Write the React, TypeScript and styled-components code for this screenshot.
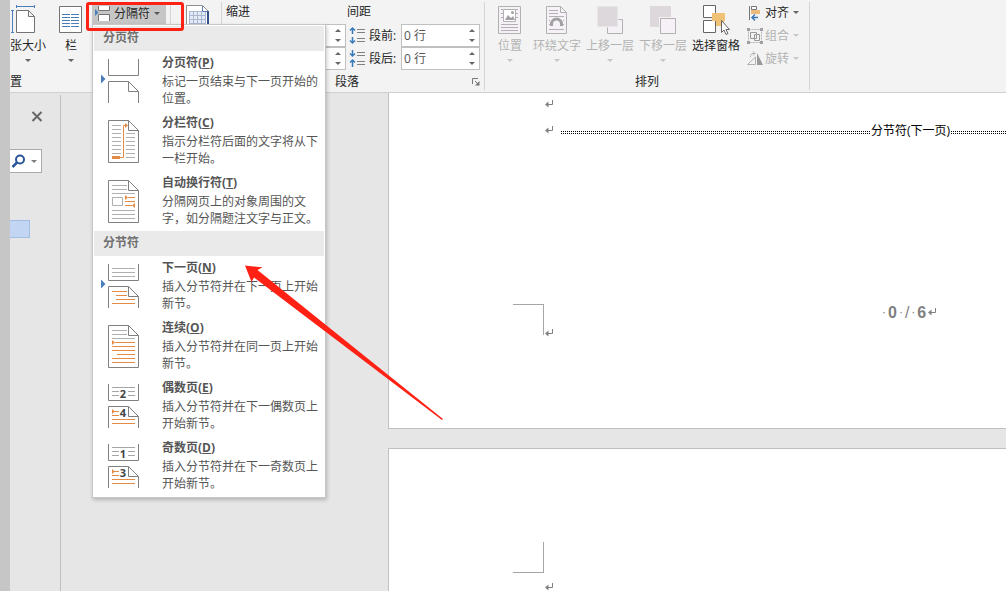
import React from "react";
import styled, { createGlobalStyle } from "styled-components";

const GlobalStyle = createGlobalStyle`
  *, *::before, *::after { box-sizing: border-box; }
  html, body { margin: 0; overflow: hidden; }
  body {
    background: #e6e6e6;
    color: #262626;
    font: 12px/17px "Open Sans", "Noto Sans CJK SC", sans-serif;
  }
  button, input { font: inherit; color: inherit; }
  button { margin: 0; padding: 0; border: 0; background: none; }
  h2, h3, p { margin: 0; font: inherit; }
  svg { display: block; flex: none; overflow: visible; }
`;

const Window = styled.div`
  position: relative;
  display: flex;
  height: 100vh;
  overflow: hidden;
`;

const Gutter = styled.div`
  flex: none;
  width: 10px;
  background: #c6c6c6;
`;

const Main = styled.div`
  flex: 1;
  min-width: 0;
  display: flex;
  flex-direction: column;
`;

/* ---------- Ribbon ---------- */

const Ribbon = styled.header`
  flex: none;
  position: relative;
  z-index: 1;
  display: flex;
  padding: 2px 0;
  background: #f3f3f3;
  border-bottom: 1px solid #d0d0d0;
`;

const Group = styled.section<{ $width: number }>`
  flex: none;
  width: ${(p) => p.$width}px;
  display: flex;
  flex-direction: column;
  border-right: 1px solid #d4d4d4;
`;

const GroupBody = styled.div<{ $indent?: number; $gap?: number }>`
  display: flex;
  gap: ${(p) => p.$gap ?? 0}px;
  height: 71px;
  padding-left: ${(p) => p.$indent ?? 0}px;
`;

const GroupLabel = styled.h2<{ $align?: string }>`
  display: flex;
  justify-content: ${(p) => p.$align ?? "center"};
  height: 17px;
`;

const LauncherRow = styled.div`
  display: grid;
  grid-template-columns: 1fr auto;
  padding-right: 4px;
  align-items: center;
`;

const LargeButton = styled.button<{ $width?: number }>`
  display: flex;
  flex-direction: column;
  align-items: center;
  width: ${(p) => p.$width ?? 48}px;
  padding-top: 2px;
  white-space: nowrap;
  &:disabled { color: #b3b3b3; }
`;

const LargeLabel = styled.span`
  margin: 4px 0 5px;
`;

const SmallColumn = styled.div`
  display: flex;
  flex-direction: column;
  gap: 6px;
  padding: 2px 0 0 2px;
`;

const SmallButton = styled.button`
  display: flex;
  align-items: center;
  gap: 2px;
  height: 17px;
  &:disabled { color: #b3b3b3; }
`;

const Caret = styled.span`
  flex: none;
  width: 0;
  height: 0;
  border: 3px solid transparent;
  border-top-color: currentColor;
  border-bottom: 0;
  opacity: 0.7;
`;

const SmallCaret = styled(Caret)`
  margin-left: 2px;
`;

const BreaksAnchor = styled.div`
  position: relative;
  margin-left: -4px;
`;

const BreaksButton = styled.button`
  display: flex;
  align-items: center;
  gap: 4px;
  width: 74px;
  height: 22px;
  padding-left: 3px;
  background: #c6c6c6;
`;

const Highlight = styled.div`
  position: absolute;
  z-index: 3;
  top: 0;
  left: -6px;
  width: 98px;
  height: 29px;
  border: 3px solid #ff2114;
  border-radius: 3px;
  pointer-events: none;
`;

const Divider = styled.div`
  width: 1px;
  height: 60px;
  margin: 2px 15px 0 4px;
  background: #d4d4d4;
`;

/* ---------- Paragraph spacing ---------- */

const FieldGrid = styled.div<{ $left: number }>`
  padding-left: ${(p) => p.$left}px;
`;

const FieldTitle = styled.h3`
  height: 22px;
  padding-top: 1px;
`;

const FieldRow = styled.div<{ $indent?: number }>`
  display: flex;
  align-items: center;
  gap: 4px;
  height: 23px;
  padding-left: ${(p) => p.$indent ?? 0}px;
`;

const FieldLabel = styled.label`
  width: 28px;
  white-space: nowrap;
`;

const SpinBox = styled.div<{ $width: number }>`
  display: flex;
  width: ${(p) => p.$width}px;
  height: 23px;
  border: 1px solid #c0c0c0;
  background: #fff;
`;

const SpinInput = styled.input`
  flex: 1;
  min-width: 0;
  padding: 0 2px;
  border: 0;
  outline: 0;
  background: none;
  color: #555;
`;

const SpinButtons = styled.div`
  display: flex;
  flex-direction: column;
  width: 15px;
`;

const SpinButton = styled.button`
  flex: 1;
  display: grid;
  place-items: center;
`;

const SpinArrow = styled(Caret)<{ $up?: boolean }>`
  transform: ${(p) => (p.$up ? "rotate(180deg)" : "none")};
`;

/* ---------- Breaks menu ---------- */

const Menu = styled.div`
  position: absolute;
  z-index: 2;
  top: 22px;
  left: 0;
  width: 234px;
  padding: 1px;
  border: 1px solid #c6c6c6;
  background: #fff;
  color: #555;
  box-shadow: 1px 2px 4px rgba(0, 0, 0, 0.22);
`;

const MenuHeading = styled.h3`
  height: 25px;
  padding: 3px 9px;
  background: #eaeaea;
  font-weight: 700;
  color: #707070;
`;

const MenuItem = styled.button`
  display: flex;
  gap: 22px;
  width: 100%;
  height: 60px;
  padding-left: 6px;
  text-align: left;
`;

const ItemText = styled.span`
  display: flex;
  flex-direction: column;
  gap: 2px;
  width: 160px;
  padding-top: 3px;
`;

const ItemTitle = styled.strong`
  font-weight: 700;
`;

const Pointer = styled.svg`
  position: absolute;
  z-index: 4;
  left: 240px;
  top: 260px;
  pointer-events: none;
`;

/* ---------- Workspace ---------- */

const Workspace = styled.div`
  flex: 1;
  min-height: 0;
  display: flex;
`;

const NavPane = styled.aside`
  flex: none;
  width: 51px;
  margin-top: 2px;
  border-right: 1px solid #c0c0c0;
`;

const CloseButton = styled.button`
  display: block;
  margin: 16px 0 0 21px;
`;

const SearchBar = styled.div`
  display: flex;
  align-items: center;
  justify-content: space-between;
  width: 32px;
  height: 24px;
  margin-top: 27px;
  padding: 0 4px 0 1px;
  border: 1px solid #ababab;
  border-left: 0;
  background: #fff;
`;

const SearchMenu = styled.button`
  display: grid;
  place-items: center;
  color: #444;
`;

const SelectedHeading = styled.div`
  width: 20px;
  height: 18px;
  margin-top: 47px;
  border: 1px solid #a3bde6;
  border-left: 0;
  background: #c2d5f2;
`;

const Pages = styled.main`
  flex: 1;
  min-width: 0;
  display: flex;
  flex-direction: column;
  gap: 19px;
  padding-left: 327px;
`;

const Page = styled.article<{ $first?: boolean }>`
  flex: ${(p) => (p.$first ? "none" : "1")};
  min-height: 0;
  padding: ${(p) => (p.$first ? "0 0 93px 124px" : "93px 0 0 124px")};
  border: 1px solid #c0c0c0;
  border-width: ${(p) => (p.$first ? "0 0 1px 1px" : "1px 0 0 1px")};
  background: #fff;
  overflow: hidden;
`;

const Paragraph = styled.div<{ $height: number }>`
  display: flex;
  align-items: center;
  height: ${(p) => p.$height}px;
  padding-left: 32px;
`;

const SectionBreak = styled.div`
  flex: 1;
  display: flex;
  align-items: center;
  gap: 1px;
  margin-left: 8px;
  color: #000;
  white-space: nowrap;
`;

const Dots = styled.span<{ $width?: number }>`
  flex: ${(p) => (p.$width ? "none" : "1")};
  width: ${(p) => (p.$width ? `${p.$width}px` : "auto")};
  height: 3px;
  margin-top: 5px;
  background:
    repeating-linear-gradient(to bottom, transparent 0 1px, #fff 1px 2px),
    repeating-linear-gradient(to right, #000 0 1px, #fff 1px 2px);
`;

const Footer = styled.footer`
  display: flex;
  align-items: flex-start;
  margin-top: 160px;
`;

const Corner = styled.div<{ $bottom?: boolean }>`
  flex: none;
  width: 31px;
  height: 31px;
  border: 0 solid #a6a6a6;
  border-right-width: 1px;
  border-top-width: ${(p) => (p.$bottom ? 0 : 1)}px;
  border-bottom-width: ${(p) => (p.$bottom ? 1 : 0)}px;
`;

const FooterMark = styled.div`
  align-self: flex-end;
  margin-left: 1px;
  height: 6px;
`;

const PageNumber = styled.p`
  display: flex;
  align-items: center;
  gap: 2px;
  margin-left: 329px;
  color: #808080;
  font: 12px/17px "Liberation Sans", sans-serif;
`;

const Digit = styled.b`
  font-size: 16px;
`;

const Slash = styled.span`
  font-size: 16px;
`;

/* ---------- Drawings ---------- */

const GRAY = "#808080";
const ORANGE = "#e48b45";
const BLUE = "#4a7ebb";

const ReturnMark = () => (
  <svg width="8" height="9" viewBox="0 0 8 9" aria-hidden="true">
    <path d="M7.5 0V4.5H2" fill="none" stroke={GRAY} />
    <path d="M0 4.5L3.5 1.5V7.5Z" fill={GRAY} />
  </svg>
);

const FullPage = () => (
  <path d="M8.5 9.5H28.5L38.5 19.5V51.5H8.5ZM28.5 9.5V19.5H38.5" fill="none" stroke={GRAY} />
);

const SplitPages = () => (
  <path
    d="M8.5 8V24.5H38.5V8M8.5 52V30.5H28.5L38.5 40.5V52M28.5 30.5V40.5H38.5"
    fill="none"
    stroke={GRAY}
  />
);

const BreakArrow = () => <path d="M1 23.5V32.5L5.5 28Z" fill={BLUE} />;

type IconKind = "page" | "column" | "wrap" | "next" | "continuous" | "even" | "odd";

const numbered = (top: string, bottom: string) => (
  <>
    <SplitPages />
    <path d="M12 11.5H35M12 15.5H19M28 15.5H35M12 19.5H19M28 19.5H35" stroke="#a6a6a6" />
    <path d="M14 35.5H19M12 39.5H19M12 43.5H35M12 47.5H35" stroke={ORANGE} />
    <path d="M12 33V38L15 35.5Z" fill={ORANGE} />
    <g fill="#444" fontSize="11" fontWeight="700" textAnchor="middle">
      <text x="23" y="22">{top}</text>
      <text x="23" y="41">{bottom}</text>
    </g>
  </>
);

const drawings: Record<IconKind, React.ReactNode> = {
  page: (
    <>
      <SplitPages />
      <BreakArrow />
    </>
  ),
  column: (
    <>
      <FullPage />
      <path
        d="M12 14.5H21M12 18.5H21M12 22.5H21M12 26.5H21M12 30.5H21M12 34.5H21M12 38.5H21M12 42.5H21M26 22.5H35M26 26.5H35M26 30.5H35M26 34.5H35M26 38.5H35M26 42.5H35M26 46.5H35"
        stroke="#b0b0b0"
      />
      <path d="M20 46.5H23.5V14.5H25" fill="none" stroke={ORANGE} />
      <path d="M12 45H20V48H12ZM25 12V17L28 14.5Z" fill={ORANGE} />
    </>
  ),
  wrap: (
    <>
      <FullPage />
      <path d="M12 14.5H27M12 18.5H27M12 22.5H35M12 39.5H35M12 43.5H35M12 47.5H35" stroke="#b0b0b0" />
      <path d="M12.5 26.5H22.5V34.5H12.5Z" fill="none" stroke="#b0b0b0" />
      <path d="M28 26.5H35M25 30.5H35M25 34.5H32" stroke={ORANGE} />
      <path d="M25 24V29L28 26.5ZM35 32V37L32 34.5Z" fill={ORANGE} />
    </>
  ),
  next: (
    <>
      <SplitPages />
      <BreakArrow />
      <path d="M12 12.5H35M12 16.5H35M12 20.5H35" stroke="#b0b0b0" />
      <path d="M12 35.5H27M16 39.5H27M16 43.5H35M12 47.5H35" stroke={ORANGE} />
    </>
  ),
  continuous: (
    <>
      <FullPage />
      <path d="M12 14.5H27M12 18.5H27M12 22.5H35" stroke="#b0b0b0" />
      <path d="M15 26.5H35M12 30.5H35M12 34.5H35M17 38.5H35M12 42.5H35M12 46.5H35" stroke={ORANGE} />
      <path d="M12 24V29L15 26.5Z" fill={ORANGE} />
    </>
  ),
  even: numbered("2", "4"),
  odd: numbered("1", "3"),
};

const MenuIcon = ({ kind }: { kind: IconKind }) => (
  <svg width="40" height="60" viewBox="0 0 40 60" aria-hidden="true">
    {drawings[kind]}
  </svg>
);

const SizeIcon = () => (
  <svg width="36" height="29" viewBox="0 0 36 29">
    <path d="M6.5 6.5H18.5L24.5 12.5V28.5H6.5ZM18.5 6.5V12.5H24.5" fill="#fff" stroke="#737373" />
    <path d="M6.5 1V4M24.5 1V4M6 2.5H25M1 6.5H4M1 28.5H4M2.5 6V29" stroke={BLUE} fill="none" />
  </svg>
);

const ColumnsIcon = () => (
  <svg width="24" height="29" viewBox="0 0 24 29">
    <path d="M.5 2.5H22.5V28.5H.5Z" fill="#fff" stroke="#737373" />
    <path
      d="M3 10.5H11M12 10.5H20M3 13.5H11M12 13.5H20M3 16.5H11M12 16.5H20M3 19.5H11M12 19.5H20M3 22.5H11M12 22.5H20"
      stroke={BLUE}
    />
  </svg>
);

const BreaksIcon = () => (
  <svg width="15" height="18" viewBox="0 0 15 18">
    <path d="M3.5 2V6.5H14.5V2M3.5 17V10.5H14.5V17" fill="#fff" stroke="#737373" />
    <path d="M0 5V12L3.5 8.5Z" fill={BLUE} />
  </svg>
);

const GridPaperIcon = () => (
  <svg width="24" height="29" viewBox="0 0 24 29">
    <path d="M.5 1.5H16.5L22.5 7.5V28.5H.5Z" fill="#fff" stroke="#8f8f8f" />
    <path d="M3 7H19V24H3Z" fill="#e4ebf6" />
    <path
      d="M3 7.5H19M3 11.5H19M3 15.5H19M3 19.5H19M3 23.5H19M3.5 7V24M7.5 7V24M11.5 7V24M15.5 7V24M19.5 7V24"
      stroke="#a9b8d0"
    />
    <path d="M16.5 2V7.5H22" fill="none" stroke="#5f7fae" />
    <path d="M22 7V28" fill="none" stroke="#33518a" strokeWidth="2" />
  </svg>
);

const SpacingIcon = ({ after }: { after?: boolean }) => (
  <svg width="16" height="17" viewBox="0 0 16 17">
    <path d="M8 2.5H16M8 5.5H16M8 11.5H16M8 14.5H16" stroke="#808080" />
    <path
      d={
        after
          ? "M3.5 0V6M1 3.5L3.5 6L6 3.5M3.5 17V10M1 12.5L3.5 10L6 12.5"
          : "M3.5 7V1M1 3.5L3.5 1L6 3.5M3.5 10V16M1 13.5L3.5 16L6 13.5"
      }
      fill="none"
      stroke="#3b7ab8"
      strokeWidth="1.5"
    />
  </svg>
);

const LauncherIcon = () => (
  <svg width="8" height="8" viewBox="0 0 8 8">
    <path d="M.5 6V.5H6M3 3L6 6" fill="none" stroke="#777" />
    <path d="M7.5 3V7.5H3Z" fill="#777" />
  </svg>
);

const PositionIcon = () => (
  <svg width="24" height="29" viewBox="0 0 24 29">
    <path d="M.5 2.5H22.5V29.5H.5Z" fill="#f6f1f7" stroke="#b3b0b3" />
    <path
      d="M3 5.5H5M18 5.5H20M3 9.5H5M18 9.5H20M3 13.5H5M18 13.5H20M3 20.5H20M3 23.5H20M3 26.5H20"
      stroke="#b3b0b3"
    />
    <path d="M5.5 5.5H17.5V17.5H5.5Z" fill="#fff" stroke="#b3b0b3" />
    <path d="M7 16L10 11L13 14L15 12L17 16Z" fill="#a3a0a3" />
    <circle cx="14.5" cy="8.5" r="1.5" fill="#a3a0a3" />
  </svg>
);

const WrapIcon = () => (
  <svg width="24" height="29" viewBox="0 0 24 29">
    <path d="M1.5 2.5H15.5L21.5 8.5V29.5H1.5ZM15.5 2.5V8.5H21.5" fill="#f6f1f7" stroke="#b3b0b3" />
    <path
      d="M4 6.5H13M4 9.5H13M4 12.5H19M4 16.5H5M18 16.5H19M4 20.5H5M18 20.5H19M4 25.5H19"
      stroke="#b3b0b3"
    />
    <path d="M6.5 22V20A5 5 0 0 1 16.5 20V22" fill="none" stroke="#a3a0a3" strokeWidth="3" />
  </svg>
);

const ForwardIcon = () => (
  <svg width="28" height="29" viewBox="0 0 28 29">
    <path d="M11.5 15.5H26.5V29.5H11.5Z" fill="#f6f1f7" stroke="#b3b0b3" />
    <path d="M1 2H22V23H1Z" fill="#dcd8dc" stroke="#f3f3f3" />
  </svg>
);

const BackwardIcon = () => (
  <svg width="28" height="29" viewBox="0 0 28 29">
    <path d="M1 2H22V23H1Z" fill="#dcd8dc" />
    <path d="M11.5 14.5H26.5V29.5H11.5Z" fill="#f6f1f7" stroke="#f3f3f3" strokeWidth="3" />
    <path d="M11.5 14.5H26.5V29.5H11.5Z" fill="#f6f1f7" stroke="#b3b0b3" />
  </svg>
);

const SelectionPaneIcon = () => (
  <svg width="28" height="29" viewBox="0 0 28 29">
    <path d="M1.5 1.5H13.5V13.5H1.5ZM1.5 16.5H13.5V28.5H1.5Z" fill="#fff" stroke="#666" />
    <path d="M10 9H23V17H10Z" fill="#f0c275" />
    <path d="M14 17H22V22H14Z" fill="#f0c275" />
    <path d="M19.5 16.5V28.5L22 26L24 30.5L26 29.5L24 25.5H27.5Z" fill="#fff" stroke="#666" />
  </svg>
);

const AlignIcon = () => (
  <svg width="16" height="16" viewBox="0 0 16 16">
    <path d="M2.500 1V15" stroke="#777" />
    <path d="M4.500 1.500H9.500V4.500H4.500Z" fill="#fff" stroke="#777" />
    <path d="M4 5H13V9H4Z" fill="#ecba7b" />
    <path d="M11 12.500H5M8 9.500L5 12.500L8 15.500" fill="none" stroke="#3b7ab8" strokeWidth="1.500" />
  </svg>
);

const GroupIcon = () => (
  <svg width="16" height="16" viewBox="0 0 16 16">
    <path d="M1.5 1.5H14.5V14.5H1.5Z" fill="none" stroke="#b3b0b3" strokeDasharray="2 1" />
    <path d="M3.5 4.5H9.5V10.5H3.5ZM7.5 6.5H12.5V12.5H7.5Z" fill="none" stroke="#999" />
    <path d="M0 0H3V3H0ZM13 0H16V3H13ZM0 13H3V16H0ZM13 13H16V16H13Z" fill="#a3a0a3" />
  </svg>
);

const RotateIcon = () => (
  <svg width="16" height="16" viewBox="0 0 16 16">
    <path d="M.5 13.5H8.5V6ZM3.5 6V4.5L5 2.5H8M6 .5L8 2.5L6 4.5" fill="none" stroke="#b3b0b3" />
    <path d="M10 2V14H16Z" fill="#999" />
  </svg>
);

const CloseIcon = () => (
  <svg width="12" height="11" viewBox="0 0 12 11">
    <path d="M1.5 1L10.5 10M10.5 1L1.5 10" stroke="#666" strokeWidth="2" />
  </svg>
);

const SearchIcon = () => (
  <svg width="14" height="14" viewBox="0 0 14 14">
    <circle cx="9" cy="5.5" r="4" fill="none" stroke="#2b579a" strokeWidth="2" />
    <path d="M6 8.5L1.500 13" stroke="#2b579a" strokeWidth="2.500" />
  </svg>
);

/* ---------- Composition ---------- */

type BreakItem = { kind: IconKind; name: string; hotkey: string; text: string };

const pageBreaks: BreakItem[] = [
  { kind: "page", name: "分页符", hotkey: "P", text: "标记一页结束与下一页开始的位置。" },
  { kind: "column", name: "分栏符", hotkey: "C", text: "指示分栏符后面的文字将从下一栏开始。" },
  { kind: "wrap", name: "自动换行符", hotkey: "T", text: "分隔网页上的对象周围的文字，如分隔题注文字与正文。" },
];

const sectionBreaks: BreakItem[] = [
  { kind: "next", name: "下一页", hotkey: "N", text: "插入分节符并在下一页上开始新节。" },
  { kind: "continuous", name: "连续", hotkey: "O", text: "插入分节符并在同一页上开始新节。" },
  { kind: "even", name: "偶数页", hotkey: "E", text: "插入分节符并在下一偶数页上开始新节。" },
  { kind: "odd", name: "奇数页", hotkey: "D", text: "插入分节符并在下一奇数页上开始新节。" },
];

const MenuSection = ({ title, items }: { title: string; items: BreakItem[] }) => (
  <>
    <MenuHeading>{title}</MenuHeading>
    {items.map((item) => (
      <MenuItem key={item.kind} role="menuitem">
        <MenuIcon kind={item.kind} />
        <ItemText>
          <ItemTitle>
            {item.name}(<u>{item.hotkey}</u>)
          </ItemTitle>
          <span>{item.text}</span>
        </ItemText>
      </MenuItem>
    ))}
  </>
);

const Spinner = ({ id, width, value, label }: { id: string; width: number; value?: string; label?: string }) => (
  <SpinBox $width={width}>
    <SpinInput id={id} defaultValue={value} aria-label={label} />
    <SpinButtons>
      <SpinButton aria-label="增加"><SpinArrow $up /></SpinButton>
      <SpinButton aria-label="减少"><SpinArrow /></SpinButton>
    </SpinButtons>
  </SpinBox>
);

const arrangeButtons = [
  { label: "位置", width: 36, icon: <PositionIcon /> },
  { label: "环绕文字", width: 48, icon: <WrapIcon /> },
  { label: "上移一层", width: 48, icon: <ForwardIcon /> },
  { label: "下移一层", width: 48, icon: <BackwardIcon /> },
];

export default function App() {
  return (
    <>
      <GlobalStyle />
      <Window>
        <Gutter />
        <Main>
          <Ribbon>
            <Group $width={212}>
              <GroupBody>
                <LargeButton $width={36}>
                  <SizeIcon />
                  <LargeLabel>张大小</LargeLabel>
                  <Caret />
                </LargeButton>
                <LargeButton $width={50}>
                  <ColumnsIcon />
                  <LargeLabel>栏</LargeLabel>
                  <Caret />
                </LargeButton>
                <BreaksAnchor>
                  <BreaksButton aria-haspopup="menu" aria-expanded="true">
                    <BreaksIcon />
                    分隔符
                    <Caret />
                  </BreaksButton>
                  <Menu role="menu">
                    <MenuSection title="分页符" items={pageBreaks} />
                    <MenuSection title="分节符" items={sectionBreaks} />
                  </Menu>
                  <Highlight />
                </BreaksAnchor>
                <Divider />
                <LargeButton $width={24} aria-label="稿纸设置">
                  <GridPaperIcon />
                </LargeButton>
              </GroupBody>
              <GroupLabel $align="flex-start">置</GroupLabel>
            </Group>

            <Group $width={263}>
              <GroupBody>
                <FieldGrid $left={4}>
                  <FieldTitle>缩进</FieldTitle>
                  <FieldRow><Spinner id="indent-left" width={120} label="左缩进" /></FieldRow>
                  <FieldRow><Spinner id="indent-right" width={120} label="右缩进" /></FieldRow>
                </FieldGrid>
                <FieldGrid $left={1}>
                  <FieldTitle>间距</FieldTitle>
                  <FieldRow $indent={2}>
                    <SpacingIcon />
                    <FieldLabel htmlFor="space-before">段前:</FieldLabel>
                    <Spinner id="space-before" width={79} value="0 行" />
                  </FieldRow>
                  <FieldRow $indent={2}>
                    <SpacingIcon after />
                    <FieldLabel htmlFor="space-after">段后:</FieldLabel>
                    <Spinner id="space-after" width={79} value="0 行" />
                  </FieldRow>
                </FieldGrid>
              </GroupBody>
              <LauncherRow>
                <GroupLabel>段落</GroupLabel>
                <button aria-label="段落设置"><LauncherIcon /></button>
              </LauncherRow>
            </Group>

            <Group $width={325}>
              <GroupBody $indent={7} $gap={5}>
                {arrangeButtons.map((b) => (
                  <LargeButton key={b.label} $width={b.width} disabled>
                    {b.icon}
                    <LargeLabel>{b.label}</LargeLabel>
                    <Caret />
                  </LargeButton>
                ))}
                <LargeButton>
                  <SelectionPaneIcon />
                  <LargeLabel>选择窗格</LargeLabel>
                </LargeButton>
                <SmallColumn>
                  <SmallButton><AlignIcon />对齐<SmallCaret /></SmallButton>
                  <SmallButton disabled><GroupIcon />组合<SmallCaret /></SmallButton>
                  <SmallButton disabled><RotateIcon />旋转<SmallCaret /></SmallButton>
                </SmallColumn>
              </GroupBody>
              <GroupLabel>排列</GroupLabel>
            </Group>
          </Ribbon>

          <Workspace>
            <NavPane>
              <CloseButton aria-label="关闭"><CloseIcon /></CloseButton>
              <SearchBar>
                <button aria-label="搜索"><SearchIcon /></button>
                <SearchMenu aria-label="搜索选项"><Caret /></SearchMenu>
              </SearchBar>
              <SelectedHeading />
            </NavPane>
            <Pages>
              <Page $first>
                <Paragraph $height={23}><ReturnMark /></Paragraph>
                <Paragraph $height={28}>
                  <ReturnMark />
                  <SectionBreak>
                    <Dots $width={309} />
                    分节符(下一页)
                    <Dots />
                  </SectionBreak>
                </Paragraph>
                <Footer>
                  <Corner />
                  <FooterMark><ReturnMark /></FooterMark>
                  <PageNumber>
                    <span>·</span>
                    <Digit>0</Digit>
                    <span>·</span>
                    <Slash>/</Slash>
                    <span>·</span>
                    <Digit>6</Digit>
                    <ReturnMark />
                  </PageNumber>
                </Footer>
              </Page>
              <Page>
                <Corner $bottom />
                <Paragraph $height={29}><ReturnMark /></Paragraph>
              </Page>
            </Pages>
          </Workspace>
        </Main>
        <Pointer width="204" height="162" viewBox="240 260 204 162" aria-hidden="true">
          <path d="M245 265.5L262.5 267.3L257.5 270L443 419L442 420L254 277.5L251.5 282Z" fill="#ff2114" />
        </Pointer>
      </Window>
    </>
  );
}
